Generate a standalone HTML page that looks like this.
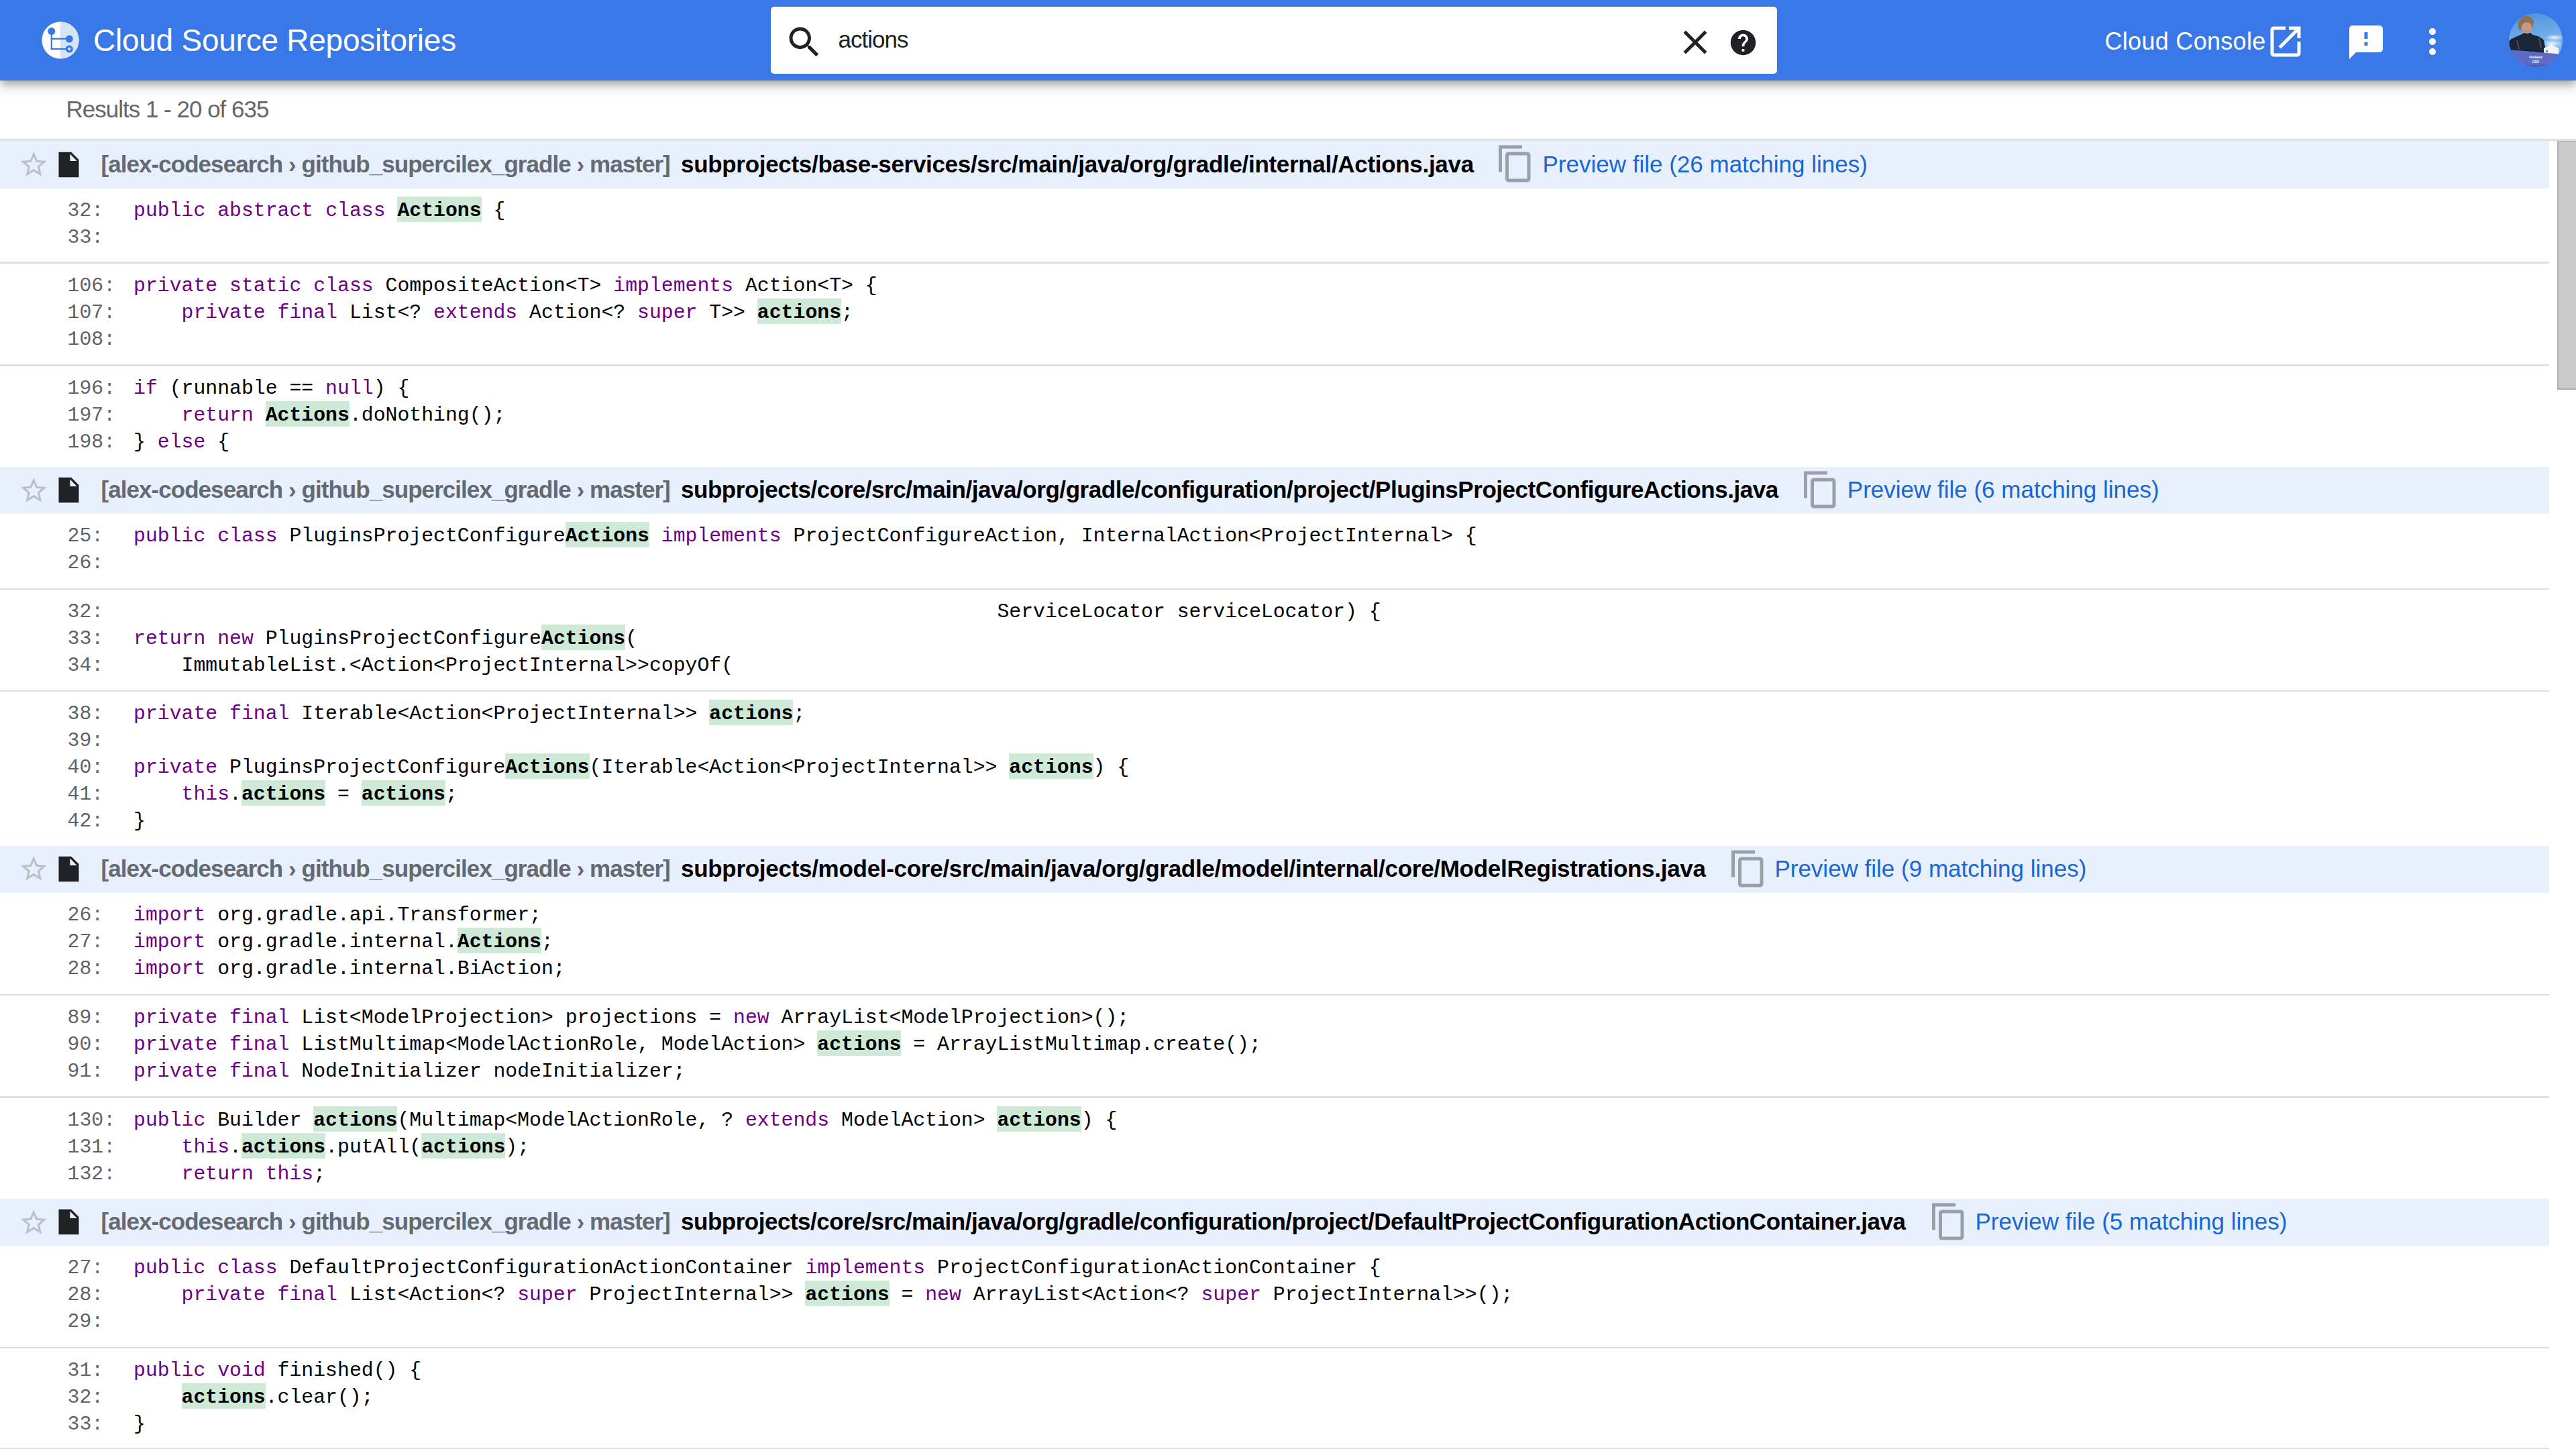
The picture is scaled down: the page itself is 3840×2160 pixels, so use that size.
<!DOCTYPE html>
<html><head><meta charset="utf-8">
<style>
html,body{margin:0;padding:0;width:3840px;height:2160px;overflow:hidden;background:#fff;position:relative}
body{font-family:"Liberation Sans",sans-serif}
.hdr{position:absolute;left:0;top:0;width:3840px;height:120px;background:#3b78e7;z-index:5;
 box-shadow:0 5px 10px -2.5px rgba(0,0,0,.2),0 10px 12.5px 0 rgba(0,0,0,.14),0 2.5px 28px 0 rgba(0,0,0,.12)}
.abs{position:absolute}
.title{position:absolute;left:139px;top:30px;font-size:46px;line-height:60px;color:#fff;letter-spacing:-0.25px;white-space:nowrap}
.search{position:absolute;left:1149px;top:10px;width:1500px;height:100px;background:#fff;border-radius:5px}
.q{position:absolute;left:1249.5px;top:39px;font-size:35px;line-height:40px;color:#202124;letter-spacing:-1px}
.cc{position:absolute;left:3137.5px;top:41.5px;font-size:36px;letter-spacing:0.3px;line-height:40px;color:#fff;white-space:nowrap}
svg.i{position:absolute;width:60px;height:60px}
.results{position:absolute;left:98.5px;top:143px;font-size:35px;line-height:40px;color:#666;letter-spacing:-1px;white-space:nowrap}
.rsep{position:absolute;left:0;top:207px;width:3840px;height:3px;background:#dfe1e4}
.thumb{position:absolute;left:3812px;top:210px;width:28px;height:371px;background:#cbcbcb;box-sizing:border-box;border-left:2.5px solid #b0b0b0;border-top:2px solid #b6b6b6;border-bottom:2px solid #b0b0b0}
.band{position:absolute;left:0;width:3800px;height:70.5px;background:#e8effd;white-space:nowrap}
.band svg{position:absolute}
.star{left:26.6px;top:11.8px;width:46.5px;height:46.5px;fill:#bdc1c6}
.file{left:79.5px;top:12.6px;width:45px;height:45px;fill:#202124}
.copy{top:4px;width:60px;height:60px;fill:#9aa0a6}
.crumb{position:absolute;left:150.5px;top:14.5px;font-size:35px;line-height:40px;font-weight:700;color:#656970;letter-spacing:-0.95px}
.path{position:absolute;left:1015px;top:14.5px;font-size:35px;line-height:40px;font-weight:700;color:#000}
.prev{position:absolute;top:14.5px;font-size:35px;line-height:40px;color:#1967d2}
.blk{position:absolute;left:0;width:3800px;box-sizing:border-box;padding-top:13px;font-family:"Liberation Mono",monospace;font-size:29.8px}
.ln{position:relative;height:40px;line-height:40px;white-space:pre}
.num{position:absolute;left:100.5px;color:#5f6368}
.code{position:absolute;left:199px;color:#000}
.k{font-style:normal;color:#6f0084}
.h{font-weight:700;background:#ceead6;color:#000;padding-top:4px}
.sep{position:absolute;left:0;width:3800px;height:2.5px;background:#e0e0e0}
</style></head><body>
<div class="hdr">
 <svg class="abs" style="left:0;top:0" width="200" height="120" viewBox="0 0 200 120">
  <circle cx="90" cy="60" r="27.6" fill="#fff"/>
  <path d="M90 32.4 A27.6 27.6 0 0 1 90 87.6 Z" fill="#d6e4f8"/>
  <g fill="#3b78e7">
   <circle cx="76.8" cy="46.5" r="5.5"/>
   <rect x="75.7" y="46" width="2.2" height="28.1"/>
   <rect x="75.7" y="56.7" width="24" height="2.2"/>
   <circle cx="103.3" cy="58" r="5.5"/>
   <rect x="75.7" y="71.9" width="24" height="2.2"/>
   <circle cx="103.3" cy="73" r="5.5"/>
  </g>
  <circle cx="103.3" cy="73" r="2" fill="#eef4fd"/>
 </svg>
 <div class="title">Cloud Source Repositories</div>
 <div class="search">
 </div>
 <svg class="i" style="left:1168.5px;top:32.5px" viewBox="0 0 24 24" fill="#202124"><path d="M15.5 14h-.79l-.28-.27C15.41 12.59 16 11.11 16 9.5 16 5.91 13.09 3 9.5 3S3 5.91 3 9.5 5.91 16 9.5 16c1.61 0 3.09-.59 4.23-1.57l.27.28v.79l5 4.99L20.49 19l-4.99-5zm-6 0C7.01 14 5 11.99 5 9.5S7.01 5 9.5 5 14 7.01 14 9.5 11.99 14 9.5 14z"/></svg>
 <div class="q">actions</div>
 <svg class="i" style="left:2497px;top:33px" viewBox="0 0 24 24" fill="#202124"><path d="M19 6.41L17.59 5 12 10.59 6.41 5 5 6.41 10.59 12 5 17.59 6.41 19 12 13.41 17.59 19 19 17.59 13.41 12z"/></svg>
 <svg class="i" style="left:2576.25px;top:41px;width:45px;height:45px" viewBox="0 0 24 24" fill="#202124"><path d="M12 2C6.48 2 2 6.48 2 12s4.48 10 10 10 10-4.48 10-10S17.52 2 12 2zm1 17h-2v-2h2v2zm2.07-7.75l-.9.92C13.45 12.9 13 13.5 13 15h-2v-.5c0-1.1.45-2.1 1.17-2.83l1.24-1.260c.37-.36.59-.86.59-1.41 0-1.1-.9-2-2-2s-2 .9-2 2H8c0-2.21 1.79-4 4-4s4 1.790 4 4c0 .88-.36 1.68-.93 2.25z"/></svg>
 <div class="cc">Cloud Console</div>
 <svg class="i" style="left:3377.2px;top:31.5px" viewBox="0 0 24 24" fill="#fff"><path d="M19 19H5V5h7V3H5c-1.11 0-2 .9-2 2v14c0 1.1.89 2 2 2h14c1.1 0 2-.9 2-2v-7h-2v7zM14 3v2h3.59l-9.83 9.83 1.41 1.41L19 6.41V10h2V3h-7z"/></svg>
 <svg class="i" style="left:3497px;top:32.8px" viewBox="0 0 24 24" fill="#fff"><path d="M20 2H4c-1.1 0-1.99.9-1.99 2L2 22l4-4h14c1.1 0 2-.9 2-2V4c0-1.1-.9-2-2-2zm-7 12h-2v-2h2v2zm0-4h-2V6h2v4z"/></svg>
 <svg class="i" style="left:3596px;top:32.4px" viewBox="0 0 24 24" fill="#fff"><path d="M12 8c1.1 0 2-.9 2-2s-.9-2-2-2-2 .9-2 2 .9 2 2 2zm0 2c-1.1 0-2 .9-2 2s.9 2 2 2 2-.9 2-2-.9-2-2-2zm0 6c-1.1 0-2 .9-2 2s.9 2 2 2 2-.9 2-2-.9-2-2-2z"/></svg>
 <svg class="abs" style="left:3740px;top:20px" width="80" height="80" viewBox="0 0 80 80">
  <defs><clipPath id="av"><circle cx="40" cy="40" r="40"/></clipPath>
  <linearGradient id="sky" x1="0" y1="0" x2="0.2" y2="1"><stop offset="0" stop-color="#4f90da"/><stop offset=".55" stop-color="#73aeea"/><stop offset="1" stop-color="#8fc2f0"/></linearGradient>
  <radialGradient id="cl" cx=".5" cy=".5" r=".5"><stop offset="0" stop-color="#eef4fb"/><stop offset="1" stop-color="#eef4fb" stop-opacity="0"/></radialGradient></defs>
  <g clip-path="url(#av)">
   <rect width="80" height="80" fill="url(#sky)"/>
   <ellipse cx="68" cy="36" rx="14" ry="5" fill="url(#cl)"/>
   <ellipse cx="64" cy="45" rx="16" ry="6" fill="url(#cl)"/>
   <path d="M0 60 L0 42 Q2 38 8 36 L19 31 L25 28 L32 29 L36 32 Q47 34 52 40 L54 50 L55 60 Z" fill="#1b2536"/>
   <path d="M12 40 L15 54 M45 37 L48 52" stroke="#465062" stroke-width="2"/>
   <path d="M19 15 Q19 11 25 11 L31 11 Q35 13 34 20 L33 26 Q30 31 26 30 Q21 29 20 23 Z" fill="#c59a80"/>
   <path d="M24 27 Q27 29 30 27" stroke="#a77a62" stroke-width="1" fill="none"/>
   <path d="M14 22 Q12 8 24 4 Q35 3 37 12 Q37 17 35 22 Q34 14 27 13 Q21 13 19 19 L17 27 Z" fill="#8f7050"/>
   <path d="M52 52 L63 46 L74 52 L74 61 L52 60 Z" fill="#f1f3f5"/>
   <path d="M55 55 l3 0 l0 3 l-3 0 z" fill="#4caf50"/>
   <path d="M0 54 L74 60.5 L80 61 L80 80 L0 80 Z" fill="#5d6bc4"/>
   <path d="M0 75 Q40 80 80 73 L80 80 L0 80 Z" fill="#4d5ab4"/>
   <text x="40" y="67" font-size="4.8" fill="#fff" text-anchor="middle" font-family="Liberation Sans" font-weight="700">Firebase</text>
   <text x="40" y="74" font-size="4.8" fill="#fff" text-anchor="middle" font-family="Liberation Sans" font-weight="700">GDE</text>
  </g>
 </svg>
</div>
<div class="results">Results 1 - 20 of 635</div>
<div class="rsep"></div>
<div class="thumb"></div>
<div class="band" style="top:210px"><svg class="star" viewBox="0 0 24 24"><path d="M22 9.24l-7.19-.62L12 2 9.19 8.63 2 9.24l5.46 4.73L5.82 21 12 17.27 18.18 21l-1.63-7.030L22 9.24zM12 15.4l-3.76 2.27 1-4.28-3.32-2.88 4.38-.38L12 6.1l1.71 4.04 4.38.38-3.32 2.88 1 4.28L12 15.4z"/></svg><svg class="file" viewBox="0 0 24 24"><path d="M4 2v20h16V8l-6-6H4zm9 7V3.5L18.5 9H13z"/></svg><span class="crumb">[alex-codesearch › github_supercilex_gradle › master]</span><span class="path" style="letter-spacing:-0.31px">subprojects/base-services/src/main/java/org/gradle/internal/Actions.java</span><svg class="copy" style="left:2229px" viewBox="0 0 24 24"><path d="M16 1H2v16h2V3h12V1zm3 4H8c-1.1 0-2 .9-2 2v14c0 1.1.9 2 2 2h11c1.1 0 2-.9 2-2V7c0-1.1-.9-2-2-2zm0 16H8V7h11v14z"/></svg><span class="prev" style="left:2299.5px">Preview file (26 matching lines)</span></div>
<div class="blk" style="top:280.5px;height:109.75px;padding-top:13px"><div class="ln"><span class="num">32:</span><span class="code"><i class="k">public</i> <i class="k">abstract</i> <i class="k">class</i> <b class="h">Actions</b> {</span></div><div class="ln"><span class="num">33:</span><span class="code"></span></div></div>
<div class="sep" style="top:390.25px"></div>
<div class="blk" style="top:392.75px;height:150.30px;padding-top:13px"><div class="ln"><span class="num">106:</span><span class="code"><i class="k">private</i> <i class="k">static</i> <i class="k">class</i> CompositeAction&lt;T&gt; <i class="k">implements</i> Action&lt;T&gt; {</span></div><div class="ln"><span class="num">107:</span><span class="code">    <i class="k">private</i> <i class="k">final</i> List&lt;? <i class="k">extends</i> Action&lt;? <i class="k">super</i> T&gt;&gt; <b class="h">actions</b>;</span></div><div class="ln"><span class="num">108:</span><span class="code"></span></div></div>
<div class="sep" style="top:543.05px"></div>
<div class="blk" style="top:545.55px;height:150.35px;padding-top:13px"><div class="ln"><span class="num">196:</span><span class="code"><i class="k">if</i> (runnable == <i class="k">null</i>) {</span></div><div class="ln"><span class="num">197:</span><span class="code">    <i class="k">return</i> <b class="h">Actions</b>.doNothing();</span></div><div class="ln"><span class="num">198:</span><span class="code">} <i class="k">else</i> {</span></div></div>
<div class="band" style="top:695.9px"><svg class="star" viewBox="0 0 24 24"><path d="M22 9.24l-7.19-.62L12 2 9.19 8.63 2 9.24l5.46 4.73L5.82 21 12 17.27 18.18 21l-1.63-7.030L22 9.24zM12 15.4l-3.76 2.27 1-4.28-3.32-2.88 4.38-.38L12 6.1l1.71 4.04 4.38.38-3.32 2.88 1 4.28L12 15.4z"/></svg><svg class="file" viewBox="0 0 24 24"><path d="M4 2v20h16V8l-6-6H4zm9 7V3.5L18.5 9H13z"/></svg><span class="crumb">[alex-codesearch › github_supercilex_gradle › master]</span><span class="path" style="letter-spacing:-0.45px">subprojects/core/src/main/java/org/gradle/configuration/project/PluginsProjectConfigureActions.java</span><svg class="copy" style="left:2683.5px" viewBox="0 0 24 24"><path d="M16 1H2v16h2V3h12V1zm3 4H8c-1.1 0-2 .9-2 2v14c0 1.1.9 2 2 2h11c1.1 0 2-.9 2-2V7c0-1.1-.9-2-2-2zm0 16H8V7h11v14z"/></svg><span class="prev" style="left:2753.8px">Preview file (6 matching lines)</span></div>
<div class="blk" style="top:766.4px;height:110.45px;padding-top:13px"><div class="ln"><span class="num">25:</span><span class="code"><i class="k">public</i> <i class="k">class</i> PluginsProjectConfigure<b class="h">Actions</b> <i class="k">implements</i> ProjectConfigureAction, InternalAction&lt;ProjectInternal&gt; {</span></div><div class="ln"><span class="num">26:</span><span class="code"></span></div></div>
<div class="sep" style="top:876.85px"></div>
<div class="blk" style="top:879.35px;height:149.30px;padding-top:13px"><div class="ln"><span class="num">32:</span><span class="code">                                                                        ServiceLocator serviceLocator) {</span></div><div class="ln"><span class="num">33:</span><span class="code"><i class="k">return</i> <i class="k">new</i> PluginsProjectConfigure<b class="h">Actions</b>(</span></div><div class="ln"><span class="num">34:</span><span class="code">    ImmutableList.&lt;Action&lt;ProjectInternal&gt;&gt;copyOf(</span></div></div>
<div class="sep" style="top:1028.65px"></div>
<div class="blk" style="top:1031.15px;height:229.55px;padding-top:13px"><div class="ln"><span class="num">38:</span><span class="code"><i class="k">private</i> <i class="k">final</i> Iterable&lt;Action&lt;ProjectInternal&gt;&gt; <b class="h">actions</b>;</span></div><div class="ln"><span class="num">39:</span><span class="code"></span></div><div class="ln"><span class="num">40:</span><span class="code"><i class="k">private</i> PluginsProjectConfigure<b class="h">Actions</b>(Iterable&lt;Action&lt;ProjectInternal&gt;&gt; <b class="h">actions</b>) {</span></div><div class="ln"><span class="num">41:</span><span class="code">    <i class="k">this</i>.<b class="h">actions</b> = <b class="h">actions</b>;</span></div><div class="ln"><span class="num">42:</span><span class="code">}</span></div></div>
<div class="band" style="top:1260.7px"><svg class="star" viewBox="0 0 24 24"><path d="M22 9.24l-7.19-.62L12 2 9.19 8.63 2 9.24l5.46 4.73L5.82 21 12 17.27 18.18 21l-1.63-7.030L22 9.24zM12 15.4l-3.76 2.27 1-4.28-3.32-2.88 4.38-.38L12 6.1l1.71 4.04 4.38.38-3.32 2.88 1 4.28L12 15.4z"/></svg><svg class="file" viewBox="0 0 24 24"><path d="M4 2v20h16V8l-6-6H4zm9 7V3.5L18.5 9H13z"/></svg><span class="crumb">[alex-codesearch › github_supercilex_gradle › master]</span><span class="path" style="letter-spacing:-0.29px">subprojects/model-core/src/main/java/org/gradle/model/internal/core/ModelRegistrations.java</span><svg class="copy" style="left:2575.7px" viewBox="0 0 24 24"><path d="M16 1H2v16h2V3h12V1zm3 4H8c-1.1 0-2 .9-2 2v14c0 1.1.9 2 2 2h11c1.1 0 2-.9 2-2V7c0-1.1-.9-2-2-2zm0 16H8V7h11v14z"/></svg><span class="prev" style="left:2645.4px">Preview file (9 matching lines)</span></div>
<div class="blk" style="top:1331.2px;height:150.55px;padding-top:13px"><div class="ln"><span class="num">26:</span><span class="code"><i class="k">import</i> org.gradle.api.Transformer;</span></div><div class="ln"><span class="num">27:</span><span class="code"><i class="k">import</i> org.gradle.internal.<b class="h">Actions</b>;</span></div><div class="ln"><span class="num">28:</span><span class="code"><i class="k">import</i> org.gradle.internal.BiAction;</span></div></div>
<div class="sep" style="top:1481.75px"></div>
<div class="blk" style="top:1484.25px;height:150.20px;padding-top:13px"><div class="ln"><span class="num">89:</span><span class="code"><i class="k">private</i> <i class="k">final</i> List&lt;ModelProjection&gt; projections = <i class="k">new</i> ArrayList&lt;ModelProjection&gt;();</span></div><div class="ln"><span class="num">90:</span><span class="code"><i class="k">private</i> <i class="k">final</i> ListMultimap&lt;ModelActionRole, ModelAction&gt; <b class="h">actions</b> = ArrayListMultimap.create();</span></div><div class="ln"><span class="num">91:</span><span class="code"><i class="k">private</i> <i class="k">final</i> NodeInitializer nodeInitializer;</span></div></div>
<div class="sep" style="top:1634.45px"></div>
<div class="blk" style="top:1636.95px;height:149.95px;padding-top:13px"><div class="ln"><span class="num">130:</span><span class="code"><i class="k">public</i> Builder <b class="h">actions</b>(Multimap&lt;ModelActionRole, ? <i class="k">extends</i> ModelAction&gt; <b class="h">actions</b>) {</span></div><div class="ln"><span class="num">131:</span><span class="code">    <i class="k">this</i>.<b class="h">actions</b>.putAll(<b class="h">actions</b>);</span></div><div class="ln"><span class="num">132:</span><span class="code">    <i class="k">return</i> <i class="k">this</i>;</span></div></div>
<div class="band" style="top:1786.9px"><svg class="star" viewBox="0 0 24 24"><path d="M22 9.24l-7.19-.62L12 2 9.19 8.63 2 9.24l5.46 4.73L5.82 21 12 17.27 18.18 21l-1.63-7.030L22 9.24zM12 15.4l-3.76 2.27 1-4.28-3.32-2.88 4.38-.38L12 6.1l1.71 4.04 4.38.38-3.32 2.88 1 4.28L12 15.4z"/></svg><svg class="file" viewBox="0 0 24 24"><path d="M4 2v20h16V8l-6-6H4zm9 7V3.5L18.5 9H13z"/></svg><span class="crumb">[alex-codesearch › github_supercilex_gradle › master]</span><span class="path" style="letter-spacing:-0.48px">subprojects/core/src/main/java/org/gradle/configuration/project/DefaultProjectConfigurationActionContainer.java</span><svg class="copy" style="left:2874.5px" viewBox="0 0 24 24"><path d="M16 1H2v16h2V3h12V1zm3 4H8c-1.1 0-2 .9-2 2v14c0 1.1.9 2 2 2h11c1.1 0 2-.9 2-2V7c0-1.1-.9-2-2-2zm0 16H8V7h11v14z"/></svg><span class="prev" style="left:2944.5px">Preview file (5 matching lines)</span></div>
<div class="blk" style="top:1857.4px;height:150.15px;padding-top:13px"><div class="ln"><span class="num">27:</span><span class="code"><i class="k">public</i> <i class="k">class</i> DefaultProjectConfigurationActionContainer <i class="k">implements</i> ProjectConfigurationActionContainer {</span></div><div class="ln"><span class="num">28:</span><span class="code">    <i class="k">private</i> <i class="k">final</i> List&lt;Action&lt;? <i class="k">super</i> ProjectInternal&gt;&gt; <b class="h">actions</b> = <i class="k">new</i> ArrayList&lt;Action&lt;? <i class="k">super</i> ProjectInternal&gt;&gt;();</span></div><div class="ln"><span class="num">29:</span><span class="code"></span></div></div>
<div class="sep" style="top:2007.55px"></div>
<div class="blk" style="top:2010.05px;height:147.70px;padding-top:13px"><div class="ln"><span class="num">31:</span><span class="code"><i class="k">public</i> <i class="k">void</i> finished() {</span></div><div class="ln"><span class="num">32:</span><span class="code">    <b class="h">actions</b>.clear();</span></div><div class="ln"><span class="num">33:</span><span class="code">}</span></div></div>
<div class="sep" style="top:2157.75px"></div>
</body></html>
